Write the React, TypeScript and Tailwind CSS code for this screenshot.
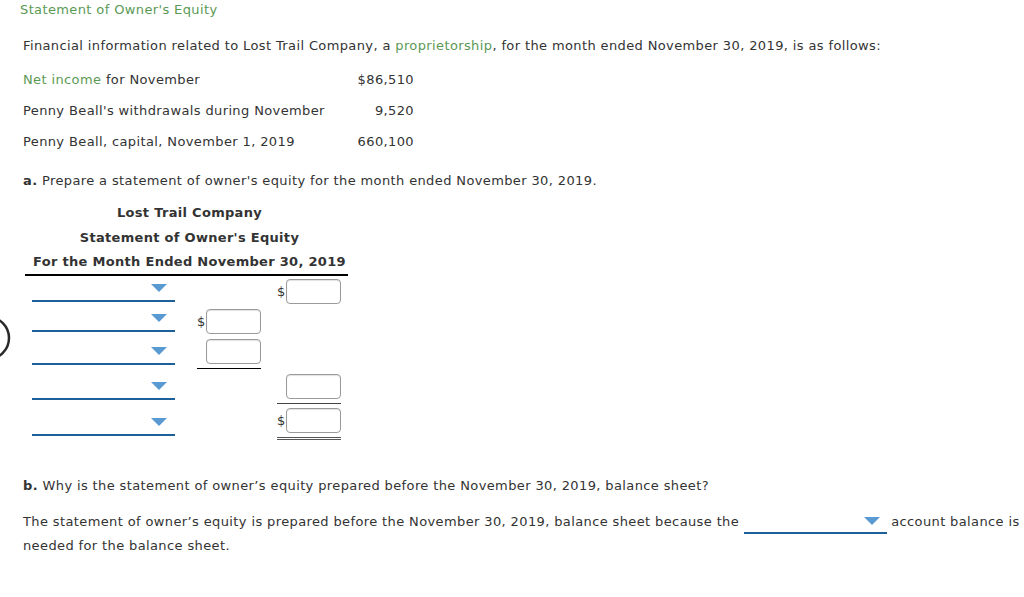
import React from 'react';

const GREEN = 'text-[#5b9a55]';

function Triangle() {
  return (
    <svg width="16" height="8" viewBox="0 0 16 8" className="block">
      <polygon points="0,0 16,0 8,8" fill="#5a9ad3" />
    </svg>
  );
}

// select with an underline, as drawn in the statement grid
function Dropdown({ pt }: { pt: string }) {
  return (
    <div className={pt}>
      <div className="h-[26px] w-[143px] border-b-2 border-[#1d5f9b] flex items-center justify-end pr-2">
        <Triangle />
      </div>
    </div>
  );
}

function AmountBox({ dollar }: { dollar?: boolean }) {
  return (
    <div className="flex items-center">
      {dollar && <span className="w-[9px] text-[13px] leading-[25px] text-[#333]">$</span>}
      <div className="ml-auto h-[25px] w-[55px] rounded-[4px] border border-[#9a9a9a] bg-white shadow-[inset_0_1px_1px_rgba(0,0,0,0.12)]" />
    </div>
  );
}

interface Row {
  h: string;
  ddPt: string;
  col1?: { dollar?: boolean; pt: string; line?: boolean };
  col2?: { dollar?: boolean; pt: string; line?: 'single' | 'double' };
}

const ROWS: Row[] = [
  { h: 'h-[29px]', ddPt: 'pt-0', col2: { dollar: true, pt: 'pt-[3px]' } },
  { h: 'h-[30px]', ddPt: 'pt-[1px]', col1: { dollar: true, pt: 'pt-[4px]' } },
  { h: 'h-[34px]', ddPt: 'pt-[4px]', col1: { pt: 'pt-[4px]', line: true } },
  { h: 'h-[35px]', ddPt: 'pt-[5px]', col2: { pt: 'pt-[5px]', line: 'single' } },
  { h: 'h-[36px]', ddPt: 'pt-[6px]', col2: { dollar: true, pt: 'pt-[4px]', line: 'double' } },
];

function StatementGrid() {
  return (
    <div className="relative">
      {/* partial circle peeking in at the left edge */}
      <svg width="12" height="50" viewBox="0 0 12 50" className="absolute left-0 top-[37px]">
        <circle cx="-12" cy="25" r="21" fill="none" stroke="#2a2a2a" strokeWidth="2.5" />
      </svg>
      {ROWS.map((r, i) => (
        <div key={i} className={`flex ${r.h}`}>
          <div className="w-[32px]" />
          <Dropdown pt={r.ddPt} />
          <div className="w-[22px]" />
          <div
            className={`w-[64px] h-full ${r.col1?.pt ?? ''} ${
              r.col1?.line ? 'border-b border-black' : ''
            }`}
          >
            {r.col1 && <AmountBox dollar={r.col1.dollar} />}
          </div>
          <div className="w-[16px]" />
          <div
            className={`w-[64px] h-full ${r.col2?.pt ?? ''} ${
              r.col2?.line === 'single'
                ? 'border-b border-[#444]'
                : r.col2?.line === 'double'
                ? 'border-b-[3px] border-double border-[#555]'
                : ''
            }`}
          >
            {r.col2 && <AmountBox dollar={r.col2.dollar} />}
          </div>
        </div>
      ))}
    </div>
  );
}

export default function App() {
  return (
    <div
      className="w-[1024px] min-h-[597px] bg-white text-[13px] tracking-[0.38px] text-[#333]"
      style={{ fontFamily: '"DejaVu Sans", Verdana, sans-serif' }}
    >
      <div className={`pt-[1px] pl-5 leading-[18px] ${GREEN}`}>Statement of Owner's Equity</div>

      <p className="mt-[18px] pl-[23px] leading-[18px]">
        Financial information related to Lost Trail Company, a{' '}
        <span className={GREEN}>proprietorship</span>, for the month ended November 30, 2019, is as
        follows:
      </p>

      {/* given data */}
      <div className="mt-[9px] pl-[23px]">
        {[
          [<><span className={GREEN}>Net income</span> for November</>, '$86,510'],
          ["Penny Beall's withdrawals during November", '9,520'],
          ['Penny Beall, capital, November 1, 2019', '660,100'],
        ].map(([label, value], i) => (
          <div key={i} className="flex h-[31px] items-center">
            <div className="w-[320px]">{label}</div>
            <div className="w-[71px] text-right">{value}</div>
          </div>
        ))}
      </div>

      <p className="mt-[15px] pl-[23px] leading-[18px]">
        <b>a.</b> Prepare a statement of owner's equity for the month ended November 30, 2019.
      </p>

      {/* statement heading */}
      <div className="mt-[10px] ml-[25px] w-[323px] pl-[6px] text-center font-bold tracking-[0.3px]">
        <div className="leading-[25px]">Lost Trail Company</div>
        <div className="leading-[25px]">Statement of Owner's Equity</div>
        <div className="-ml-[6px] h-[26px] pl-[6px] leading-[24px] border-b-2 border-black">
          For the Month Ended November 30, 2019
        </div>
      </div>

      <StatementGrid />

      <p className="mt-[37px] pl-[23px] leading-[18px]">
        <b>b.</b> Why is the statement of owner’s equity prepared before the November 30, 2019, balance
        sheet?
      </p>

      <p className="mt-[15px] pl-[23px] leading-[24px]">
        The statement of owner’s equity is prepared before the November 30, 2019, balance sheet because
        the{' '}
        <span className="relative inline-block h-[22px] w-[143px] border-b-2 border-[#1d5f9b] align-[-8px]">
          <span className="absolute right-[7px] top-[5px]">
            <Triangle />
          </span>
        </span>{' '}
        account balance is needed for the balance sheet.
      </p>
    </div>
  );
}
